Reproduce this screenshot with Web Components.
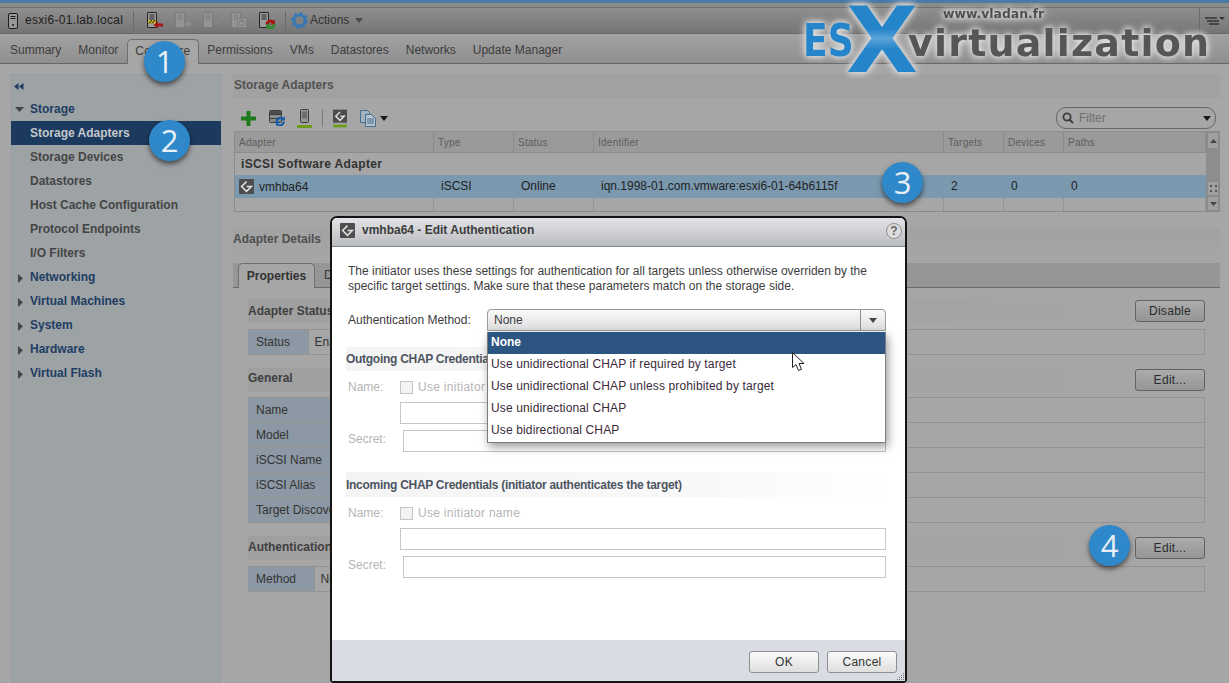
<!DOCTYPE html>
<html>
<head>
<meta charset="utf-8">
<title>Edit Authentication</title>
<style>
  html, body { margin: 0; height: 100%; }
  body {
    width: 1229px; height: 683px; overflow: hidden; position: relative;
    background: #a6a6a6; color: #333;
    font: 12px/15px "Liberation Sans", Arial, sans-serif;
  }
  .workspace { display: flex; align-items: flex-start; padding: 10px 9px 0 11px; gap: 12px; }
</style>
</head>
<body>
<vs-header></vs-header>
<vs-tabs></vs-tabs>
<div class="workspace">
  <vs-nav></vs-nav>
  <vs-main></vs-main>
</div>
<vs-dialog></vs-dialog>
<vs-logo></vs-logo>
<vs-badge style="left:144px;top:41px">1</vs-badge>
<vs-badge style="left:149px;top:120px">2</vs-badge>
<vs-badge style="left:882px;top:162px">3</vs-badge>
<vs-badge style="left:1089px;top:525px">4</vs-badge>

<script>
class Shadowed extends HTMLElement {
    connectedCallback() {
        this.attachShadow({ mode: 'open' });
        this.shadowRoot.innerHTML = this.render();
    }
}

// the little grey adapter chip with the white chevron
const chip = (size) => `<svg width="${size}" height="${size}" viewBox="0 0 15 15"><rect width="15" height="15" rx="1" fill="#4e4e4e"/><path d="M7.5 2.6 2.6 7.5l4.900 4.900 4.900-4.900H7.600" fill="none" stroke="#e2e2e2" stroke-width="1.500"/></svg>`;

const caret = (color) => `<svg width="8" height="5" viewBox="0 0 8 5"><path d="M0 0h8L4 5z" fill="${color}"/></svg>`;

class VsHeader extends Shadowed {
    render() {
        const server = (inner, color = '#242424', fill = '#9c9c9c') => `<svg width="17" height="17" viewBox="0 0 17 17"><rect x=".5" y=".5" width="9" height="15" rx=".5" fill="${fill}" stroke="${color}"/><path d="M2.500 3h5M2.500 5h5M2.500 7h5" stroke="${color}"/>${inner}</svg>`;
        return `
            <style>
                :host { display: block; }
                .stripe { height: 3px; background: #4b79a6; }
                .sub { height: 5px; background: #8b8b8b; border-bottom: 1px solid #6f6f6f; box-sizing: border-box; }
                .bar {
                    height: 26px; display: flex; align-items: center; padding-left: 8px;
                    background: linear-gradient(#8f8f8f, #757575);
                    border-bottom: 1px solid #686868; box-sizing: border-box;
                }
                .title { margin-left: 7px; color: #1d1d1d; letter-spacing: .3px; width: 100px; white-space: nowrap; }
                .sep { width: 1px; height: 20px; background: #6a6a6a; margin: 0 13px 0 8px; }
                svg { display: block; flex: none; }
                .ico { margin-right: 11px; }
                .actions { margin-left: 2px; color: #333; }
                .caret { margin-left: 6px; }
                .right { margin-left: auto; display: flex; align-items: center; height: 100%; border-left: 1px solid #6a6a6a; padding: 0 3px 0 4px; }
            </style>
            <div class="stripe"></div>
            <div class="sub"></div>
            <div class="bar">
                <svg width="10" height="16" viewBox="0 0 10 16"><rect x=".5" y=".5" width="9" height="15" rx="1.5" fill="#999" stroke="#1c1c1c"/><path d="M2.500 3.500h5M2.500 5.500h5" stroke="#1c1c1c"/><circle cx="5" cy="12" r="1" fill="#1c1c1c"/></svg>
                <span class="title">esxi6-01.lab.local</span>
                <span class="sep"></span>
                <span class="ico">${server('<path d="M1 8h8v3.500H1z" fill="#c9b21e"/><path d="M2 11.500l3-3.500M5 11.500l3-3.500" stroke="#222"/><path d="M6.500 13 11 9.500v2h5v3h-5v2z" fill="#a81616"/>')}</span>
                <span class="ico">${server('<path d="M10 10.500h3V8l4 4-4 4v-2.500h-3z" fill="#8f8f8f" stroke="#808080" stroke-width=".5"/>', '#7d7d7d', '#949494')}</span>
                <span class="ico">${server('<path d="M10 11h3" stroke="#7d7d7d"/><path d="M12 8.500l5 2.500-5 2.500z" fill="#858585"/>', '#7d7d7d', '#949494')}</span>
                <span class="ico">${server('<rect x="6.500" y="6.500" width="9" height="9" rx="1" fill="#989898" stroke="#7d7d7d"/><circle cx="11" cy="11" r="2.700" fill="none" stroke="#7a7a7a"/><path d="M11 8.500V11" stroke="#7a7a7a"/>', '#7d7d7d', '#949494')}</span>
                <span class="ico">${server('<path d="M6.500 12.500a5 5 0 0 1 8.500-3.500l1-1.200v4.700h-4.600l1.400-1.500a2.700 2.700 0 0 0-4.200 1.500z" fill="#a81616"/><path d="M16.500 12a5 5 0 0 1-8.500 3.800L7 17v-4.500h4.600l-1.500 1.700a2.700 2.700 0 0 0 4.200-2.200z" fill="#2d8a2d"/>')}</span>
                <span class="sep" style="margin:0 5px 0 -2px"></span>
                <svg width="17" height="17" viewBox="0 0 17 17"><circle cx="8.500" cy="8.500" r="5.500" fill="none" stroke="#3a78b4" stroke-width="3"/><circle cx="8.500" cy="8.500" r="7.400" fill="none" stroke="#3a78b4" stroke-width="2.200" stroke-dasharray="2.900 2.900"/></svg>
                <span class="actions">Actions</span>
                <span class="caret">${caret('#4a4a4a')}</span>
                <span class="right"><svg width="22" height="12" viewBox="0 0 22 12"><path d="M1 3h12M3 6h12M5 9h10" stroke="#333" stroke-width="1.400"/><path d="M15 2h6l-3 3z" fill="#333"/></svg></span>
            </div>`;
    }
}
customElements.define('vs-header', VsHeader);

class VsTabs extends Shadowed {
    render() {
        const names = ['Summary', 'Monitor', 'Configure', 'Permissions', 'VMs', 'Datastores', 'Networks', 'Update Manager'];
        return `
            <style>
                :host {
                    display: flex; height: 30px; box-sizing: border-box; padding: 5px 0 0 1.5px;
                    background: linear-gradient(#a2a2a2, #8f8f8f);
                    border-bottom: 1px solid #666;
                }
                div { padding: 0 8.5px; line-height: 23px; color: #3c3c3c; height: 24px; box-sizing: border-box; white-space: nowrap; }
                .on {
                    background: #a6a6a6; border: 1px solid #6e6e6e; border-bottom: 0;
                    border-radius: 5px 5px 0 0; padding: 0; width: 72px; text-align: center; letter-spacing: .35px;
                    margin-bottom: -1px; height: 25px;
                }
            </style>
            ${names.map(n => `<div class="${n === 'Configure' ? 'on' : ''}">${n}</div>`).join('')}`;
    }
}
customElements.define('vs-tabs', VsTabs);

class VsNav extends Shadowed {
    render() {
        const leaf = ['Storage Adapters', 'Storage Devices', 'Datastores', 'Host Cache Configuration', 'Protocol Endpoints', 'I/O Filters'];
        const groups = ['Networking', 'Virtual Machines', 'System', 'Hardware', 'Virtual Flash'];
        return `
            <style>
                :host {
                    display: block; flex: none; width: 210px; height: 609px; box-sizing: border-box;
                    background: #9da2a4; border: solid #949da3; border-width: 1px 1px 0 1px;
                    font-weight: bold;
                }
                .back { height: 22px; display: flex; align-items: center; padding-left: 2px; }
                .row { height: 24px; line-height: 24px; white-space: nowrap; box-sizing: border-box; }
                .leaf { padding-left: 18px; color: #454545; }
                .leaf.on { background: #1c3a5e; color: #c3c8cd; margin: 0 -1px; padding-left: 19px; }
                .group { display: flex; align-items: center; color: #1f3d63; }
                .group svg { margin: 1px 5px 0 3px; flex: none; }
            </style>
            <div class="back"><svg width="10" height="7" viewBox="0 0 10 7"><path d="M0 3.500 4.500 0v7zM5 3.500 9.500 0v7z" fill="#1f3d63"/></svg></div>
            <div class="row group"><svg width="10" height="6" viewBox="0 0 10 6"><path d="M0 0h9L4.500 5z" fill="#444"/></svg>Storage</div>
            ${leaf.map((n, i) => `<div class="row leaf ${i === 0 ? 'on' : ''}">${n}</div>`).join('')}
            ${groups.map(n => `<div class="row group"><svg width="10" height="9" viewBox="0 0 10 9" style="margin-top:3px"><path d="M3 0v9l5-4.500z" fill="#444"/></svg>${n}</div>`).join('')}`;
    }
}
customElements.define('vs-nav', VsNav);

class VsButton extends Shadowed {
    render() {
        return `
            <style>
                :host {
                    display: flex; align-items: center; justify-content: center; flex: none;
                    width: 70px; height: 22px; box-sizing: border-box;
                    border: 1px solid var(--btn-border, #626262); border-radius: 3px;
                    background: var(--btn-bg, linear-gradient(#acacac, #959595));
                    color: var(--btn-color, #2b2b2b); letter-spacing: .3px; font-weight: normal;
                }
            </style>
            <slot></slot>`;
    }
}
customElements.define('vs-button', VsButton);

class VsAdapters extends Shadowed {
    render() {
        const head = ['Adapter', 'Type', 'Status', 'Identifier', 'Targets', 'Devices', 'Paths'];
        const row = ['vmhba64', 'iSCSI', 'Online', 'iqn.1998-01.com.vmware:esxi6-01-64b6115f', '2', '0', '0'];
        return `
            <style>
                :host { display: flex; margin-left: 1px; height: 81px; box-sizing: border-box; border: 1px solid #8b8b8b; border-top-color: #8f8f8f; width: 986px; }
                .grid { flex: 1; display: grid; grid-template-columns: 199px 80px 80px 350px 60px 60px 1fr; grid-template-rows: 21px 22px 23px 1fr; }
                .h { background: #9a9a9a; border: solid #8c8c8c; border-width: 0 1px 1px 0; font-size: 10px; letter-spacing: .25px; color: #5c5c5c; padding-left: 4px; line-height: 21px; }
                .g { grid-column: 1 / -1; font-weight: bold; letter-spacing: .35px; padding-left: 6px; line-height: 22px; color: #333; }
                .c { background: #7a98ae; padding-left: 7px; line-height: 22px; color: #1f1f1f; border-right: 1px solid #7a98ae; white-space: nowrap; }
                .c.first { display: flex; align-items: center; padding-left: 4px; gap: 5px; }
                .e { border-right: 1px solid #949494; }
                .scroll { width: 12px; flex: none; background: #8e8e8e; border-left: 1px solid #8c8c8c; display: flex; flex-direction: column; }
                .scroll div { display: flex; align-items: center; justify-content: center; background: #a0a0a0; border: 1px solid #8a8a8a; box-sizing: border-box; }
                .up { height: 17px; } .grip { height: 15px; margin-top: auto; } .down { height: 15px; }
                svg { display: block; }
            </style>
            <div class="grid">
                ${head.map(h => `<div class="h">${h}</div>`).join('')}
                <div class="g">iSCSI Software Adapter</div>
                ${row.map((c, i) => i === 0 ? `<div class="c first">${chip(15)}${c}</div>` : `<div class="c">${c}</div>`).join('')}
                ${head.map(() => '<div class="e"></div>').join('')}
            </div>
            <div class="scroll">
                <div class="up"><svg width="7" height="4" viewBox="0 0 7 4"><path d="M0 4h7L3.500 0z" fill="#444"/></svg></div>
                <div class="grip"><svg width="7" height="7" viewBox="0 0 7 7"><path d="M0 0h2v2H0zM5 0h2v2H5zM0 5h2v2H0zM5 5h2v2H5z" fill="#555"/></svg></div>
                <div class="down"><svg width="7" height="4" viewBox="0 0 7 4"><path d="M0 0h7L3.500 4z" fill="#444"/></svg></div>
            </div>`;
    }
}
customElements.define('vs-adapters', VsAdapters);

class VsToolbar extends Shadowed {
    render() {
        return `
            <style>
                :host { display: flex; align-items: center; height: 33px; padding: 7px 4px 0 8px; box-sizing: border-box; }
                svg { display: block; flex: none; }
                .filter {
                    margin-left: auto; width: 160px; height: 22px; box-sizing: border-box;
                    border: 1px solid #676767; border-radius: 10px;
                    display: flex; align-items: center; padding: 0 4px 0 5px; color: #6e6e6e;
                }
                .filter span { margin: 0 auto 0 5px; }
            </style>
            <svg width="15" height="15" viewBox="0 0 15 15" style="margin-right:13px"><path d="M5.500 0h4v5.500H15v4H9.500V15h-4V9.500H0v-4h5.500z" fill="#1d7a1d"/></svg>
            <svg width="16" height="16" viewBox="0 0 16 16" style="margin-right:12px"><rect x=".5" y=".5" width="12" height="12" rx="1" fill="#8c8c8c" stroke="#3e3e3e"/><path d="M1 4.500h11M1 8.500h11" stroke="#3e3e3e"/><rect x="1" y="1" width="11" height="3" fill="#4e4e4e"/><path d="M7.500 12a4 4 0 0 1 6.500-3.200M14.800 11.500a4 4 0 0 1-6.500 3" fill="none" stroke="#155ca8" stroke-width="2.200"/><path d="M15.800 6v4.500h-4.500zM6.800 16v-4.500h4.500z" fill="#155ca8"/></svg>
            <svg width="15" height="19" viewBox="0 0 15 19" style="margin-right:10px"><rect x="3.500" y=".5" width="8" height="13" rx="1" fill="#959595" stroke="#3c3c3c"/><rect x="5" y="2.500" width="5" height="7" fill="#6d6d6d"/><rect y="16" width="15" height="3" fill="#6d9b1c"/></svg>
            <span style="width:1px;height:18px;background:#7a7a7a;margin-right:10px"></span>
            <svg width="14" height="19" viewBox="0 0 15 19" style="margin-right:13px"><rect width="15" height="14" fill="#4c4c4c"/><path d="M7.500 2.500 3 7l4.500 4.500L12 7H8" fill="none" stroke="#ddd" stroke-width="1.600"/><rect y="16" width="15" height="3" fill="#6d9b1c"/></svg>
            <svg width="16" height="17" viewBox="0 0 16 17" style="margin-right:4px"><path d="M.5.500h7l2 2v10h-9z" fill="#a3b2bf" stroke="#476d90"/><path d="M5.500 4.500h6l4 4v8h-10z" fill="#b6c3cd" stroke="#476d90"/><path d="M7 9h7M7 11h7M7 13h7" stroke="#476d90"/></svg>
            ${caret('#1a1a1a')}
            <div class="filter">
                <svg width="12" height="12" viewBox="0 0 12 12"><circle cx="5" cy="5" r="3.600" fill="none" stroke="#3e3e3e" stroke-width="1.800"/><path d="M7.500 7.500l3.500 3.500" stroke="#3e3e3e" stroke-width="2"/></svg>
                <span>Filter</span>
                ${caret('#1a1a1a')}
            </div>`;
    }
}
customElements.define('vs-toolbar', VsToolbar);

class VsSection extends Shadowed {
    render() {
        const rows = (this.getAttribute('rows') || '').split('|');
        const label = this.getAttribute('label-width') || '60';
        const value = this.getAttribute('value') || '';
        const action = this.getAttribute('action');
        return `
            <style>
                :host { display: block; margin-bottom: 13px; }
                .head {
                    height: 24px; display: flex; align-items: center; justify-content: space-between;
                    font-weight: bold; color: #3f3f3f; background: linear-gradient(90deg, #9f9f9f, #a6a6a6);
                }
                .head span { margin-bottom: var(--lift, 0); }
                table { width: 100%; border-collapse: collapse; margin-top: var(--gap, 6px); }
                td { height: 24px; padding: 0; border: 1px solid #939393; line-height: 15px; color: #333; }
                td:first-child { width: ${label}px; background: #8c98a3; padding-left: 8px; box-sizing: border-box; border-right: 0; border-left: 0; white-space: nowrap; overflow: hidden; }
                td:last-child { padding-left: 6px; }
            </style>
            <div class="head"><span>${this.getAttribute('title')}</span>${action ? `<vs-button>${action}</vs-button>` : ''}</div>
            <table>${rows.map(r => `<tr><td>${r}</td><td>${value}</td></tr>`).join('')}</table>`;
    }
}
customElements.define('vs-section', VsSection);

class VsMain extends Shadowed {
    render() {
        return `
            <style>
                :host { display: block; flex: none; width: 987px; }
                .title { height: 24px; line-height: 23px; padding-left: 1px; font-weight: bold; color: #525252; background: #a1a1a1; }
                .detail { margin-top: 16px; height: 24px; line-height: 23px; font-weight: bold; color: #4f4f4f; background: linear-gradient(#a2a2a2, #a6a6a6); padding-bottom: 11px; }
                .band { height: 25px; background: #969696; border-bottom: 1px solid #6a6a6a; box-sizing: border-box; display: flex; align-items: flex-end; padding-left: 5px; }
                .tab { width: 77px; height: 25px; margin-bottom: -1px; box-sizing: border-box; background: #a6a6a6; border: 1px solid #6e6e6e; border-bottom: 0; border-radius: 5px 5px 0 0; font-weight: bold; color: #333; text-align: center; line-height: 24px; }
                .tab2 { margin-left: 9px; align-self: center; color: #333; }
                .body { padding: 11px 15px 0 15px; }
            </style>
            <div class="title">Storage Adapters</div>
            <vs-toolbar></vs-toolbar>
            <vs-adapters></vs-adapters>
            <div class="detail">Adapter Details</div>
            <div class="band"><div class="tab">Properties</div><div class="tab2">Devices</div></div>
            <div class="body">
                <vs-section title="Adapter Status" action="Disable" rows="Status" label-width="60" value="Enabled"></vs-section>
                <vs-section title="General" action="Edit..." rows="Name|Model|iSCSI Name|iSCSI Alias|Target Discovery" label-width="100" style="--gap:5px;--lift:3px"></vs-section>
                <vs-section title="Authentication" action="Edit..." rows="Method" label-width="66" value="None" style="--lift:2px"></vs-section>
            </div>`;
    }
}
customElements.define('vs-main', VsMain);

class VsCreds extends Shadowed {
    render() {
        return `
            <style>
                :host { display: block; color: #b5b5b5; }
                .strip { height: var(--strip, 24px); line-height: var(--strip-line, 25px); font-weight: bold; letter-spacing: -.28px; color: #4d5563; background: linear-gradient(90deg, #f4f4f4, #f9f9f9 70%, #fff); white-space: nowrap; overflow: hidden; }
                .form { display: grid; grid-template-columns: 52px 1fr; padding: 8px 0 0 2px; }
                .check { display: flex; align-items: center; gap: 5px; height: 16px; letter-spacing: .3px; }
                .check i { width: 13px; height: 13px; box-sizing: border-box; border: 1px solid #c4c4c4; background: #f3f3f3; }
                .lab { line-height: 16px; }
                .box { height: 22px; box-sizing: border-box; border: 1px solid #c6c6c6; background: #fff; margin-top: 7px; }
                .secret { margin: 6px 0 0 3px; }
                .seclab { margin-top: 5px; line-height: 20px; }
            </style>
            <div class="strip">${this.getAttribute('title')}</div>
            <div class="form">
                <div class="lab">Name:</div><div class="check"><i></i>Use initiator name</div>
                <div></div><div class="box"></div>
                <div class="seclab">Secret:</div><div class="box secret"></div>
            </div>`;
    }
}
customElements.define('vs-creds', VsCreds);

class VsDropdown extends Shadowed {
    render() {
        const items = ['None', 'Use unidirectional CHAP if required by target', 'Use unidirectional CHAP unless prohibited by target', 'Use unidirectional CHAP', 'Use bidirectional CHAP'];
        return `
            <style>
                :host {
                    position: absolute; left: 155px; top: 114px; width: 399px; box-sizing: border-box; z-index: 2;
                    background: #fff; border: solid #7d7d7d; border-width: 0 1px 1px 1px;
                    box-shadow: 2px 4px 9px rgba(0,0,0,.4);
                }
                div { height: 22px; line-height: 21px; padding-left: 3px; color: #3a2a3a; white-space: nowrap; letter-spacing: .14px; }
                .on { background: #2c5581; color: #fff; font-weight: bold; letter-spacing: 0; }
            </style>
            ${items.map((t, i) => `<div class="${i === 0 ? 'on' : ''}">${t}</div>`).join('')}`;
    }
}
customElements.define('vs-dropdown', VsDropdown);

class VsDialog extends Shadowed {
    render() {
        return `
            <style>
                :host {
                    position: absolute; left: 330px; top: 216px; width: 577px; height: 467px; box-sizing: border-box;
                    display: flex; flex-direction: column; background: #fff; color: #3d3d3d;
                    border: 2px solid #141414; border-radius: 7px 7px 4px 4px;
                }
                .bar {
                    flex: none; height: 29px; box-sizing: border-box; display: flex; align-items: center; padding: 0 3px 3px 8px; gap: 7px;
                    background: linear-gradient(#e3e4e7, #b9bcc0); border-bottom: 1px solid #858585;
                    border-radius: 5px 5px 0 0; font-weight: bold; color: #3c3c3c;
                }
                .help { margin-left: auto; width: 16px; height: 16px; box-sizing: border-box; border-radius: 50%; border: 1px solid #8f8f8f; background: #ddd; color: #666; font-weight: bold; font-size: 12px; line-height: 14px; text-align: center; }
                .body { flex: 1; padding: 17px 19px 0 14px; }
                p { margin: 0 0 0 2px; line-height: 15px; }
                .method { display: flex; align-items: center; margin: 15px 0 16px 2px; height: 22px; }
                .method label { width: 139px; flex: none; }
                .select { flex: 1; height: 22px; box-sizing: border-box; border: 1px solid #9a9a9a; border-radius: 4px 4px 0 0; background: linear-gradient(#fafafa, #dcdcdc); display: flex; align-items: center; padding-left: 6px; }
                .select span { flex: 1; }
                .select b { width: 24px; height: 100%; border-left: 1px solid #8d8d8d; display: flex; align-items: center; justify-content: center; }
                .incoming { margin-top: 20px; --strip: 25px; --strip-line: 26px; }
                .foot { flex: none; height: 41px; background: #d9dde3; display: flex; justify-content: flex-end; gap: 8px; padding: 11px 8px 0 0; box-sizing: border-box; position: relative;
                    --btn-bg: linear-gradient(#fbfbfb, #dedede); --btn-border: #8f8f8f; --btn-color: #333; }
                .grip { position: absolute; right: 0; bottom: 0; }
                .ptr { position: absolute; left: 460px; top: 134px; z-index: 3; }
            </style>
            <div class="bar">${chip(15)}<span>vmhba64 - Edit Authentication</span><div class="help">?</div></div>
            <div class="body">
                <p>The initiator uses these settings for authentication for all targets unless otherwise overriden by the<br>specific target settings. Make sure that these parameters match on the storage side.</p>
                <div class="method">
                    <label>Authentication Method:</label>
                    <div class="select"><span>None</span><b>${caret('#444')}</b></div>
                </div>
                <vs-creds title="Outgoing CHAP Credentials (target authenticates the initiator)"></vs-creds>
                <vs-creds class="incoming" title="Incoming CHAP Credentials (initiator authenticates the target)"></vs-creds>
            </div>
            <vs-dropdown></vs-dropdown>
            <svg class="ptr" width="13" height="20" viewBox="0 0 13 20"><path d="M.5.500v15l3.500-3 2.500 6 3-1.200-2.500-5.800h5z" fill="#fff" stroke="#222"/></svg>
            <div class="foot">
                <vs-button>OK</vs-button><vs-button>Cancel</vs-button>
                <svg class="grip" width="9" height="9" viewBox="0 0 9 9"><path d="M7 1h1v1H7zM5 3h1v1H5zM7 3h1v1H7zM3 5h1v1H3zM5 5h1v1H5zM7 5h1v1H7zM1 7h1v1H1zM3 7h1v1H3zM5 7h1v1H5zM7 7h1v1H7z" fill="#777"/></svg>
            </div>`;
    }
}
customElements.define('vs-dialog', VsDialog);

class VsBadge extends Shadowed {
    render() {
        return `
            <style>
                :host {
                    position: absolute; width: 41px; height: 41px; border-radius: 50%; z-index: 5;
                    background: #2e88c9; color: #e8f0f6; box-shadow: 0 3px 5px rgba(0,0,0,.55);
                    display: flex; align-items: center; justify-content: center;
                    font: 31px/41px "Open Sans", "Liberation Sans", sans-serif;
                }
            </style>
            <slot></slot>`;
    }
}
customElements.define('vs-badge', VsBadge);

class VsLogo extends Shadowed {
    render() {
        return `
            <style>
                :host { position: absolute; left: 800px; top: 0; width: 420px; height: 90px; z-index: 4; font-family: "DejaVu Sans", sans-serif; font-weight: bold; filter: drop-shadow(0 0 3px #dcdcdc) drop-shadow(0 0 3px #dcdcdc); }
                span { position: absolute; white-space: nowrap; }
                .es { left: 3px; top: 17px; font-size: 44px; line-height: 48px; color: #2585cb; transform-origin: 0 50%; transform: scaleX(.82); }
                .x { left: 46px; top: 1px; font-size: 90px; line-height: 80px; color: #2585cb; transform-origin: 0 50%; transform: scaleX(1.04); background: linear-gradient(180deg, #2585cb 35%, #5ba3d8 47%, #2585cb 60%); -webkit-background-clip: text; background-clip: text; -webkit-text-fill-color: transparent; }
                .v { left: 108px; top: 18px; font-size: 38px; line-height: 50px; color: #565656; letter-spacing: 1.2px; }
                .w { left: 143px; top: 6px; font-size: 12.4px; line-height: 15px; color: #505050; }
            </style>
            <span class="w">www.vladan.fr</span>
            <span class="v">virtualization</span>
            <span class="es">ES</span>
            <span class="x">X</span>`;
    }
}
customElements.define('vs-logo', VsLogo);
</script>
</body>
</html>
